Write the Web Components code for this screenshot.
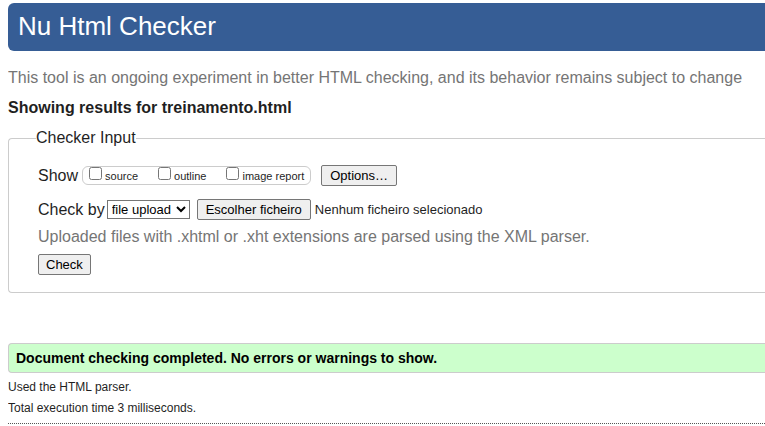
<!DOCTYPE html>
<html lang="en">
<head>
<meta charset="utf-8">
<title>Nu Html Checker</title>
<style>
body { margin: 3px 0 0 8px; background: #fff; color: #1f1f1f; font: 16px/20px "Liberation Sans", Arial, sans-serif; }
</style>
</head>
<body>
<nu-checker></nu-checker>

<template id="nu-checker">
  <style>
    :host { display: block; }
    p, h2 { margin: 0; font-size: 16px; line-height: 20px; }
    .intro { color: #757575; margin-top: 17px; }
    h2 { margin-top: 10px; }
    checker-results { margin-top: 50px; }
  </style>
  <checker-banner>Nu Html Checker</checker-banner>
  <p class="intro">This tool is an ongoing experiment in better HTML checking, and its behavior remains subject to change</p>
  <h2>Showing results for treinamento.html</h2>
  <checker-form></checker-form>
  <checker-results>
    <span slot="status">Document checking completed. No errors or warnings to show.</span>
    <p>Used the HTML parser.</p>
    <p>Total execution time 3 milliseconds.</p>
  </checker-results>
</template>

<template id="checker-banner">
  <style>
    :host { display: block; }
    h1 { margin: 0; padding: 8px 10px 10px; border-radius: 6px 0 0 6px; background: #365d95; color: #fff; font-size: 26px; line-height: 30px; font-weight: 400; }
  </style>
  <h1><slot></slot></h1>
</template>

<template id="checker-button">
  <style>
    :host { display: inline-flex; }
    button { box-sizing: border-box; height: 21px; margin: 0; padding: 0 var(--button-pad, 7px); border: 1px solid #767676; border-radius: 2px; background: #efefef; color: #000; font: 13px/17px "Liberation Sans", Arial, sans-serif; white-space: nowrap; }
    button:hover { background: #e5e5e5; }
  </style>
  <button type="button"><slot></slot></button>
</template>

<template id="checker-option">
  <style>
    :host { display: inline-flex; }
    label { display: flex; align-items: flex-start; gap: 3px; font-size: 11px; line-height: 18px; white-space: nowrap; }
    input { width: 13px; height: 13px; margin: 0; }
  </style>
  <label><input type="checkbox"><span><slot></slot></span></label>
</template>

<template id="checker-file">
  <style>
    :host { display: inline-flex; align-items: center; gap: 4px; font-size: 13px; white-space: nowrap; }
    input { display: none; }
  </style>
  <checker-button>Escolher ficheiro</checker-button>
  <input type="file" aria-label="Escolher ficheiro">
  <output>Nenhum ficheiro selecionado</output>
</template>

<template id="checker-form">
  <style>
    :host { display: block; margin-top: 10px; }
    fieldset { min-width: 0; margin: 0; padding: 17px 0 17px 29px; border: 1px solid #ccc; border-right: 0; border-radius: 4px 0 0 4px; }
    legend { margin-left: -2px; padding: 0; }
    .row { display: flex; align-items: center; height: 21px; --button-pad: 8px; }
    .submit { --button-pad: 7px; }
    .options { display: flex; box-sizing: border-box; gap: 20px; height: 19px; margin: 0 10px 0 4px; padding: 0 6px; border: 1px solid #ccc; border-radius: 6px; }
    .by { margin-top: 13px; }
    select { box-sizing: border-box; width: 83px; height: 19px; margin: 0 7px 0 2px; padding: 0; border: 1px solid #767676; border-radius: 0; background: #fff; color: #000; font: 13px/17px "Liberation Sans", Arial, sans-serif; }
    .hint { margin: 7px 0; color: #757575; }
  </style>
  <form>
    <fieldset>
      <legend>Checker Input</legend>
      <div class="row">
        <span>Show</span>
        <div class="options">
          <checker-option>source</checker-option>
          <checker-option>outline</checker-option>
          <checker-option>image report</checker-option>
        </div>
        <checker-button>Options…</checker-button>
      </div>
      <div class="row by">
        <label for="method">Check by</label>
        <select id="method"><option>address</option><option selected>file upload</option><option>text input</option></select>
        <checker-file></checker-file>
      </div>
      <p class="hint">Uploaded files with .xhtml or .xht extensions are parsed using the XML parser.</p>
      <div class="row submit"><checker-button>Check</checker-button></div>
    </fieldset>
  </form>
</template>

<template id="checker-results">
  <style>
    :host { display: block; border-bottom: 1px dotted #555; padding-bottom: 4px; }
    .status { padding: 4px 7px; border: 1px solid #ccc; border-right: 0; border-radius: 4px 0 0 4px; background: #cfc; color: #000; font-size: 14px; line-height: 20px; font-weight: 700; margin-bottom: 4px; }
    ::slotted(p) { font-size: 12px !important; line-height: 21px !important; }
  </style>
  <div class="status" role="status"><slot name="status"></slot></div>
  <slot></slot>
</template>

<script>
class CheckerElement extends HTMLElement {
  constructor() {
    super();
    this.attachShadow({ mode: 'open' })
      .append(document.getElementById(this.localName).content.cloneNode(true));
  }
}
class CheckerFile extends CheckerElement {
  constructor() {
    super();
    const input = this.shadowRoot.querySelector('input');
    this.shadowRoot.querySelector('checker-button').addEventListener('click', () => input.click());
    input.addEventListener('change', () => {
      this.shadowRoot.querySelector('output').textContent = input.files.length ? input.files[0].name : 'Nenhum ficheiro selecionado';
    });
  }
}
customElements.define('checker-file', CheckerFile);
for (const name of ['checker-banner', 'checker-button', 'checker-option', 'checker-form', 'checker-results', 'nu-checker']) {
  customElements.define(name, class extends CheckerElement {});
}
</script>
</body>
</html>
